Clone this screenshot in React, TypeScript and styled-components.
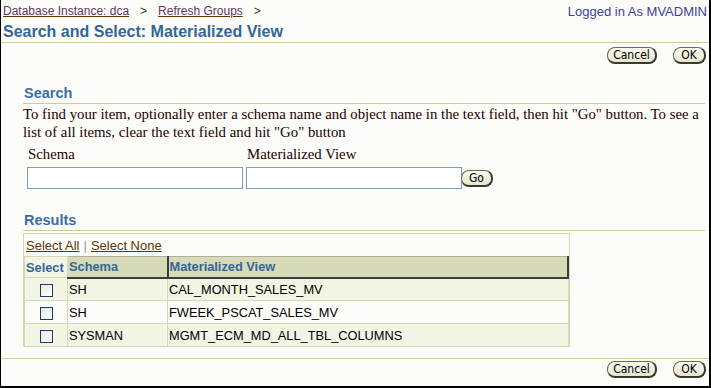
import React from "react";
import styled, { createGlobalStyle } from "styled-components";

const GlobalStyle = createGlobalStyle`
  html, body {
    margin: 0;
    padding: 0;
    background: #fcfdf9;
  }
  * {
    box-sizing: border-box;
  }
`;

const Frame = styled.div`
  width: 711px;
  height: 388px;
  border-left: 1px solid #000;
  border-right: 2px solid #000;
  border-bottom: 2px solid #000;
  background: #fcfdf9;
  font-family: "Liberation Sans", Arial, sans-serif;
  overflow: hidden;
`;

const TopBar = styled.div`
  display: flex;
  justify-content: space-between;
  align-items: center;
  height: 22px;
  padding: 0 2px 0 2px;
  font-size: 12px;
`;

const Crumbs = styled.div`
  display: flex;
  gap: 11px;
  color: #333;
`;

const CrumbLink = styled.a`
  color: #663366;
  text-decoration: underline;
  text-decoration-color: #663300;
`;

const LoggedIn = styled.span`
  color: #4040a0;
  font-size: 13px;
`;

const Title = styled.h1`
  margin: 0;
  padding: 0 0 0 2px;
  height: 21px;
  font-size: 16px;
  font-weight: bold;
  color: #336699;
  line-height: 19px;
  border-bottom: 1px solid #cccc99;
`;

const ButtonRow = styled.div<{ $top: number }>`
  display: flex;
  justify-content: flex-end;
  gap: 16px;
  padding-right: 3px;
  margin-top: ${({ $top }) => $top}px;
`;

const Button = styled.button<{ $w: number }>`
  width: ${({ $w }) => $w}px;
  height: 17px;
  padding: 0;
  font-family: "DejaVu Sans Condensed", "DejaVu Sans", sans-serif;
  font-size: 12px;
  line-height: 14px;
  color: #000;
  background: linear-gradient(#fbfbf2, #e6e6cf);
  border: 1px solid #6a6a58;
  border-right: 2px solid #3a3a30;
  border-bottom: 2px solid #3a3a30;
  border-radius: 8px;
`;

const Body = styled.div`
  padding: 0 4px 0 22px;
`;

const SectionHeader = styled.h2<{ $top: number }>`
  margin: ${({ $top }) => $top}px 0 0 0;
  padding-left: 1px;
  height: 20px;
  font-size: 14.5px;
  font-weight: bold;
  color: #3a6ea5;
  line-height: 18px;
  border-bottom: 1px solid #cccc99;
`;

const Hint = styled.p`
  margin: 1px 0 0 0;
  font-family: "Liberation Serif", "Times New Roman", serif;
  font-size: 14.8px;
  line-height: 18px;
  color: #200;
`;

const SearchForm = styled.div`
  display: grid;
  grid-template-columns: 219px 215px auto;
  grid-template-rows: 22px 22px;
  padding-left: 4px;
  margin-top: 4px;
  align-items: end;
`;

const Label = styled.label`
  font-family: "Liberation Serif", "Times New Roman", serif;
  font-size: 14.8px;
  color: #200;
  padding-left: 1px;
  line-height: 18px;
  align-self: start;
`;

const TextInput = styled.input`
  width: 216px;
  height: 22px;
  border: 1px solid #7f9db9;
  background: #fff;
`;

const GoWrap = styled.div`
  display: flex;
  align-items: center;
  height: 22px;
`;

const ResultsBox = styled.div`
  width: 547px;
  margin-top: 2px;
  border: 1px solid #d6d9b5;
  border-bottom: none;
`;

const SelectLinks = styled.div`
  display: flex;
  align-items: center;
  height: 22px;
  padding-left: 2px;
  gap: 4px;
  font-size: 13px;
  color: #999;
`;

const ActionLink = styled.a`
  color: #663300;
  text-decoration: underline;
`;

const Table = styled.table`
  width: 100%;
  border-collapse: collapse;
  font-size: 12.8px;
`;

const HeadCell = styled.th<{ $plain?: boolean; $w?: number }>`
  height: 21px;
  padding: 0 1px;
  text-align: left;
  font-weight: bold;
  color: #336699;
  width: ${({ $w }) => ($w ? `${$w}px` : "auto")};
  background: ${({ $plain }) => ($plain ? "#f2f4e4" : "#d6dab6")};
  border-top: 1px solid ${({ $plain }) => ($plain ? "#d6d9b5" : "#b0b0a0")};
  border-left: 1px solid ${({ $plain }) => ($plain ? "#d6d9b5" : "#8c8c80")};
  border-right: ${({ $plain }) => ($plain ? "1px solid #d6d9b5" : "2px solid #3c3c3c")};
  border-bottom: ${({ $plain }) => ($plain ? "1px solid #d6d9b5" : "2px solid #3c3c3c")};
`;

const Row = styled.tr<{ $odd: boolean }>`
  background: ${({ $odd }) => ($odd ? "#f2f4e4" : "#fcfdf9")};
`;

const Cell = styled.td<{ $center?: boolean }>`
  height: 23px;
  padding: 0 1px;
  color: #000;
  text-align: ${({ $center }) => ($center ? "center" : "left")};
  border: 1px solid #d6d9b5;
`;

const Check = styled.span`
  display: inline-block;
  width: 13px;
  height: 13px;
  vertical-align: middle;
  border: 1px solid #1c3c6c;
  background: linear-gradient(135deg, #e6e6e0, #fff);
`;

const Footer = styled.div`
  margin-top: 11px;
  border-top: 1px solid #cccc99;
`;

const rows = [
  { schema: "SH", view: "CAL_MONTH_SALES_MV" },
  { schema: "SH", view: "FWEEK_PSCAT_SALES_MV" },
  { schema: "SYSMAN", view: "MGMT_ECM_MD_ALL_TBL_COLUMNS" },
];

function Actions({ top }: { top: number }) {
  return (
    <ButtonRow $top={top}>
      <Button $w={50}>Cancel</Button>
      <Button $w={33}>OK</Button>
    </ButtonRow>
  );
}

export default function App() {
  return (
    <Frame>
      <GlobalStyle />
      <TopBar>
        <Crumbs>
          <CrumbLink>Database Instance: dca</CrumbLink>
          <span>&gt;</span>
          <CrumbLink>Refresh Groups</CrumbLink>
          <span>&gt;</span>
        </Crumbs>
        <LoggedIn>Logged in As MVADMIN</LoggedIn>
      </TopBar>
      <Title>Search and Select: Materialized View</Title>
      <Actions top={4} />
      <Body>
        <SectionHeader $top={20}>Search</SectionHeader>
        <Hint>
          To find your item, optionally enter a schema name and object name in
          the text field, then hit "Go" button. To see a list of all items, clear
          the text field and hit "Go" button
        </Hint>
        <SearchForm>
          <Label>Schema</Label>
          <Label>Materialized View</Label>
          <span />
          <TextInput />
          <TextInput />
          <GoWrap>
            <Button $w={32}>Go</Button>
          </GoWrap>
        </SearchForm>
        <SectionHeader $top={22}>Results</SectionHeader>
        <ResultsBox>
          <SelectLinks>
            <ActionLink>Select All</ActionLink>
            <span>|</span>
            <ActionLink>Select None</ActionLink>
          </SelectLinks>
          <Table>
            <thead>
              <tr>
                <HeadCell $plain $w={43}>Select</HeadCell>
                <HeadCell $w={100}>Schema</HeadCell>
                <HeadCell>Materialized View</HeadCell>
              </tr>
            </thead>
            <tbody>
              {rows.map((r, i) => (
                <Row key={r.view} $odd={i % 2 === 0}>
                  <Cell $center>
                    <Check />
                  </Cell>
                  <Cell>{r.schema}</Cell>
                  <Cell>{r.view}</Cell>
                </Row>
              ))}
            </tbody>
          </Table>
        </ResultsBox>
      </Body>
      <Footer>
        <Actions top={2} />
      </Footer>
    </Frame>
  );
}
